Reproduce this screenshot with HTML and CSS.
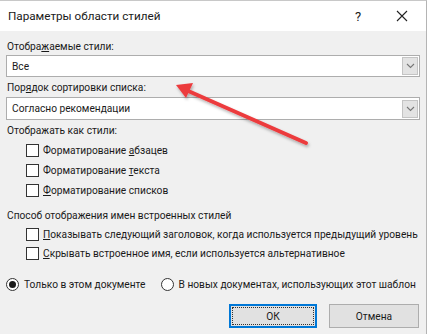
FILE: index.html
```html
<!DOCTYPE html>
<html lang="ru">
<head>
<meta charset="UTF-8">
<meta name="viewport" content="width=device-width,initial-scale=1.0">
<title>Параметры области стилей</title>
<link rel="stylesheet" href="styles.css">
</head>
<body>
<div class="dialog">
<div class="titlebar">
<span class="title">Параметры области стилей</span>
<span class="help">?</span>
<span class="close">
<svg width="12" height="12" viewBox="0 0 12 12"><path d="M1 1L11 11M11 1L1 11" stroke="#222" stroke-width="1.1" fill="none"/></svg>
</span>
</div>
<div class="content">
<div class="label l1">Отобра<u>ж</u>аемые стили:</div>
<div class="select">
<span class="value">Все</span>
<span class="drop"><svg width="9" height="6" viewBox="0 0 9 6"><path d="M1 1L4.5 4.5L8 1" stroke="#777" stroke-width="1.1" fill="none"/></svg></span>
</div>
<div class="label l2">Пор<u>я</u>док сортировки списка:</div>
<div class="select s2">
<span class="value">Согласно рекомендации</span>
<span class="drop"><svg width="9" height="6" viewBox="0 0 9 6"><path d="M1 1L4.5 4.5L8 1" stroke="#777" stroke-width="1.1" fill="none"/></svg></span>
</div>
<div class="label l3">Отображать как стили:</div>
<div class="checks">
<div class="check"><span class="box"></span><span>Форматирование <u>а</u>бзацев</span></div>
<div class="check"><span class="box"></span><span>Форматирование <u>т</u>екста</span></div>
<div class="check"><span class="box"></span><span><u>Ф</u>орматирование списков</span></div>
</div>
<div class="label l4">Способ отображения имен встроенных стилей</div>
<div class="checks tight">
<div class="check"><span class="box"></span><span><u>П</u>оказывать следующий заголовок, когда используется предыдущий уровень</span></div>
<div class="check"><span class="box"></span><span><u>С</u>крывать встроенное имя, если используется альтернативное</span></div>
</div>
<div class="radios">
<div class="radio"><span class="circle on"></span><span>Только в этом документе</span></div>
<div class="radio r2"><span class="circle"></span><span>В новых документах, использующих этот шаблон</span></div>
</div>
<div class="buttons">
<div class="btn ok"><span class="focus">ОК</span></div>
<div class="btn">Отмена</div>
</div>
</div>
<svg class="arrow" width="430" height="334" viewBox="0 0 430 334">
<defs>
<filter id="sh" x="-10%" y="-10%" width="120%" height="130%">
<feDropShadow dx="1" dy="2" stdDeviation="1.5" flood-color="#000" flood-opacity="0.3"/>
</filter>
</defs>
<g filter="url(#sh)">
<line x1="306" y1="142" x2="186" y2="89" stroke="#ec3b3e" stroke-width="4" stroke-linecap="round"/>
<polygon points="176,84 193,82 186,97" fill="#ec3b3e"/>
</g>
</svg>
</div>
</body>
</html>
```

FILE: styles.css
```css
body{
margin:0;
background:#ffffff;
font-family:Roboto,"Noto Sans",Arial,sans-serif;
font-size:10.2px;
color:#1a1a1a;
}
.dialog{
position:relative;
width:427px;
height:334px;
border-right:1px solid #b4b4b4;
border-top:1px solid #c8c8c8;
box-sizing:border-box;
background:#f0f0f0;
overflow:hidden;
white-space:nowrap;
}
.titlebar{
height:30px;
background:#ffffff;
display:flex;
align-items:center;
}
.title{
font-size:11.7px;
margin-left:8px;
flex:1;
}
.help{
font-size:13px;
width:20px;
margin-right:21px;
}
.close{
display:flex;
margin-right:18px;
}
.content{
padding:0 6px 0 6px;
display:flex;
flex-direction:column;
}
.label{
height:16px;
line-height:16px;
padding-left:1px;
}
.l1{
margin-top:8px;
}
.l2{
margin-top:3px;
}
.l3{
margin-top:3px;
}
.l4{
margin-top:8px;
}
.select{
height:22px;
width:414px;
box-sizing:border-box;
border:1px solid #adadad;
background:#ffffff;
display:flex;
align-items:center;
justify-content:space-between;
}
.s2{
margin-top:1px;
height:23px;
}
.value{
padding-left:5px;
}
.drop{
width:16px;
height:18px;
margin-right:1px;
background:#e3e3e3;
border:1px solid #c4c4c4;
box-sizing:border-box;
display:flex;
align-items:center;
justify-content:center;
}
.checks{
margin-top:1px;
padding-left:20px;
display:flex;
flex-direction:column;
}
.check{
height:20px;
display:flex;
align-items:center;
}
.tight .check{
height:19px;
}
.box{
flex:none;
width:13px;
height:13px;
box-sizing:border-box;
border:1px solid #333333;
background:#ffffff;
margin-right:4px;
}
.radios{
margin-top:13px;
height:16px;
display:flex;
align-items:center;
}
.radio{
display:flex;
align-items:center;
}
.r2{
margin-left:15px;
}
.circle{
flex:none;
width:13px;
height:13px;
box-sizing:border-box;
border:1px solid #333333;
border-radius:50%;
background:#ffffff;
margin-right:5px;
position:relative;
}
.circle.on::after{
content:"";
position:absolute;
left:2px;
top:2px;
width:7px;
height:7px;
border-radius:50%;
background:#1a1a1a;
}
.buttons{
margin-top:12px;
display:flex;
justify-content:flex-end;
gap:12px;
padding-right:1px;
}
.btn{
width:90px;
height:24px;
box-sizing:border-box;
border:1px solid #adadad;
background:#e1e1e1;
display:flex;
align-items:center;
justify-content:center;
}
.ok{
width:88px;
border:2px solid #0078d7;
padding:1px;
}
.focus{
width:100%;
height:100%;
border:1px dotted #333333;
box-sizing:border-box;
display:flex;
align-items:center;
justify-content:center;
}
.arrow{
position:absolute;
left:0;
top:0;
pointer-events:none;
}
```
